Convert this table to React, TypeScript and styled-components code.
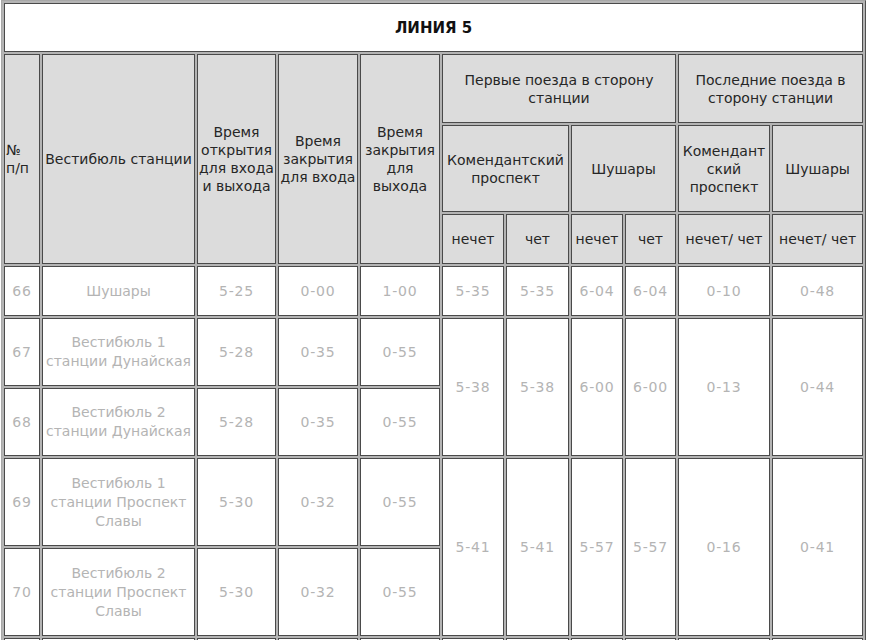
import React from "react";
import styled, { createGlobalStyle } from "styled-components";

const GlobalStyle = createGlobalStyle`
  html, body {
    margin: 0;
    padding: 0;
    background: #ffffff;
  }
  body {
    font-family: "DejaVu Sans", Verdana, sans-serif;
  }
`;

const Table = styled.table`
  margin: 0 0 0 1px;
  width: 865px;
  table-layout: fixed;
  border-collapse: separate;
  border-spacing: 2px;
  background: #b4b4b4;
  border: 1px solid;
  border-color: #a8a8a8 #505050 #505050 #a8a8a8;
  font-family: "DejaVu Sans", Verdana, sans-serif;
  font-size: 14px;
  line-height: 18px;
`;

const Col = styled.col<{ $w: number }>`
  width: ${(p) => p.$w}px;
`;

const Row = styled.tr<{ $h: number }>`
  height: ${(p) => p.$h}px;
`;

const TitleCell = styled.td`
  box-sizing: border-box;
  border: 1px solid #4a4a4a;
  background: #ffffff;
  color: #111111;
  font-weight: bold;
  font-size: 15px;
  text-align: center;
  vertical-align: middle;
  padding: 1px;
`;

const HeadCell = styled.td<{ $left?: boolean }>`
  box-sizing: border-box;
  border: 1px solid #4a4a4a;
  background: #dcdcdc;
  color: #262626;
  text-align: ${(p) => (p.$left ? "left" : "center")};
  vertical-align: middle;
  padding: 1px;
  white-space: nowrap;
  overflow: hidden;
`;

const BodyCell = styled.td<{ $num?: boolean }>`
  box-sizing: border-box;
  border: 1px solid #4a4a4a;
  background: #ffffff;
  color: #b4b4b4;
  text-align: center;
  vertical-align: middle;
  padding: 1px 0;
  line-height: 19px;
  letter-spacing: ${(p) => (p.$num ? "0.8px" : "0")};
  white-space: nowrap;
  overflow: hidden;
`;

const colWidths = [36, 153, 79, 80, 80, 62, 63, 52, 51, 92, 91];

type Station = {
  num: string;
  name: string[];
  open: string;
  closeIn: string;
  closeOut: string;
  h: number;
};

type Trains = { values: string[]; span: number };

const stations: Station[] = [
  { num: "66", name: ["Шушары"], open: "5-25", closeIn: "0-00", closeOut: "1-00", h: 50 },
  { num: "67", name: ["Вестибюль 1", "станции Дунайская"], open: "5-28", closeIn: "0-35", closeOut: "0-55", h: 68 },
  { num: "68", name: ["Вестибюль 2", "станции Дунайская"], open: "5-28", closeIn: "0-35", closeOut: "0-55", h: 68 },
  { num: "69", name: ["Вестибюль 1", "станции Проспект", "Славы"], open: "5-30", closeIn: "0-32", closeOut: "0-55", h: 88 },
  { num: "70", name: ["Вестибюль 2", "станции Проспект", "Славы"], open: "5-30", closeIn: "0-32", closeOut: "0-55", h: 88 },
];

// trains keyed by the row index where the (possibly merged) cells start
const trains: Record<number, Trains> = {
  0: { values: ["5-35", "5-35", "6-04", "6-04", "0-10", "0-48"], span: 1 },
  1: { values: ["5-38", "5-38", "6-00", "6-00", "0-13", "0-44"], span: 2 },
  3: { values: ["5-41", "5-41", "5-57", "5-57", "0-16", "0-41"], span: 2 },
};

const Lines = ({ lines }: { lines: string[] }) => (
  <>
    {lines.map((l, i) => (
      <React.Fragment key={i}>
        {i > 0 && <br />}
        {l}
      </React.Fragment>
    ))}
  </>
);

const App = () => {
  return (
    <>
      <GlobalStyle />
      <Table>
        <colgroup>
          {colWidths.map((w, i) => (
            <Col key={i} $w={w} />
          ))}
        </colgroup>
        <tbody>
          <Row $h={49}>
            <TitleCell colSpan={11}>ЛИНИЯ 5</TitleCell>
          </Row>
          <Row $h={69}>
            <HeadCell rowSpan={3} $left>
              <Lines lines={["№", "п/п"]} />
            </HeadCell>
            <HeadCell rowSpan={3}>Вестибюль станции</HeadCell>
            <HeadCell rowSpan={3}>
              <Lines lines={["Время", "открытия", "для входа", "и выхода"]} />
            </HeadCell>
            <HeadCell rowSpan={3}>
              <Lines lines={["Время", "закрытия", "для входа"]} />
            </HeadCell>
            <HeadCell rowSpan={3}>
              <Lines lines={["Время", "закрытия", "для", "выхода"]} />
            </HeadCell>
            <HeadCell colSpan={4}>
              <Lines lines={["Первые поезда в сторону", "станции"]} />
            </HeadCell>
            <HeadCell colSpan={2}>
              <Lines lines={["Последние поезда в", "сторону станции"]} />
            </HeadCell>
          </Row>
          <Row $h={87}>
            <HeadCell colSpan={2}>
              <Lines lines={["Комендантский", "проспект"]} />
            </HeadCell>
            <HeadCell colSpan={2}>Шушары</HeadCell>
            <HeadCell>
              <Lines lines={["Комендант", "ский", "проспект"]} />
            </HeadCell>
            <HeadCell>Шушары</HeadCell>
          </Row>
          <Row $h={50}>
            <HeadCell>нечет</HeadCell>
            <HeadCell>чет</HeadCell>
            <HeadCell>нечет</HeadCell>
            <HeadCell>чет</HeadCell>
            <HeadCell>нечет/ чет</HeadCell>
            <HeadCell>нечет/ чет</HeadCell>
          </Row>
          {stations.map((s, i) => (
            <Row key={s.num} $h={s.h}>
              <BodyCell $num>{s.num}</BodyCell>
              <BodyCell>
                <Lines lines={s.name} />
              </BodyCell>
              <BodyCell $num>{s.open}</BodyCell>
              <BodyCell $num>{s.closeIn}</BodyCell>
              <BodyCell $num>{s.closeOut}</BodyCell>
              {trains[i] &&
                trains[i].values.map((v, j) => (
                  <BodyCell key={j} $num rowSpan={trains[i].span}>
                    {v}
                  </BodyCell>
                ))}
            </Row>
          ))}
          <Row $h={50}>
            {colWidths.map((_, i) => (
              <BodyCell key={i} />
            ))}
          </Row>
        </tbody>
      </Table>
    </>
  );
};

export default App;
